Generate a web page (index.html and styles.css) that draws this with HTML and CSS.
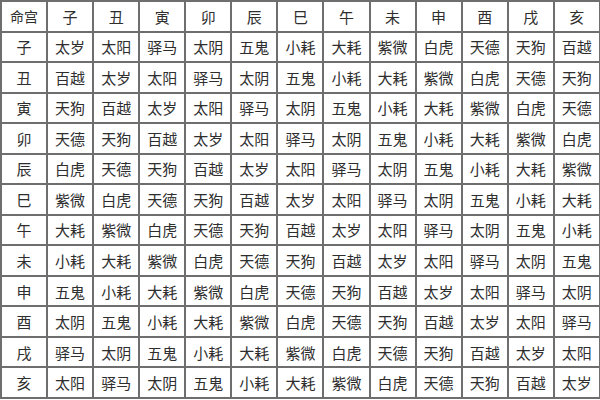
FILE: index.html
```html
<!DOCTYPE html>
<html lang="zh">
<head>
<meta charset="utf-8">
<link rel="stylesheet" href="styles.css">
</head>
<body>
<table class="grid">
<tr class="head"><td class="corner">命宫</td><td>子</td><td>丑</td><td>寅</td><td>卯</td><td>辰</td><td>巳</td><td>午</td><td>未</td><td>申</td><td>酉</td><td>戌</td><td>亥</td></tr>
<tr><td>子</td><td>太岁</td><td>太阳</td><td>驿马</td><td>太阴</td><td>五鬼</td><td>小耗</td><td>大耗</td><td>紫微</td><td>白虎</td><td>天德</td><td>天狗</td><td>百越</td></tr>
<tr><td>丑</td><td>百越</td><td>太岁</td><td>太阳</td><td>驿马</td><td>太阴</td><td>五鬼</td><td>小耗</td><td>大耗</td><td>紫微</td><td>白虎</td><td>天德</td><td>天狗</td></tr>
<tr><td>寅</td><td>天狗</td><td>百越</td><td>太岁</td><td>太阳</td><td>驿马</td><td>太阴</td><td>五鬼</td><td>小耗</td><td>大耗</td><td>紫微</td><td>白虎</td><td>天德</td></tr>
<tr><td>卯</td><td>天德</td><td>天狗</td><td>百越</td><td>太岁</td><td>太阳</td><td>驿马</td><td>太阴</td><td>五鬼</td><td>小耗</td><td>大耗</td><td>紫微</td><td>白虎</td></tr>
<tr><td>辰</td><td>白虎</td><td>天德</td><td>天狗</td><td>百越</td><td>太岁</td><td>太阳</td><td>驿马</td><td>太阴</td><td>五鬼</td><td>小耗</td><td>大耗</td><td>紫微</td></tr>
<tr><td>巳</td><td>紫微</td><td>白虎</td><td>天德</td><td>天狗</td><td>百越</td><td>太岁</td><td>太阳</td><td>驿马</td><td>太阴</td><td>五鬼</td><td>小耗</td><td>大耗</td></tr>
<tr><td>午</td><td>大耗</td><td>紫微</td><td>白虎</td><td>天德</td><td>天狗</td><td>百越</td><td>太岁</td><td>太阳</td><td>驿马</td><td>太阴</td><td>五鬼</td><td>小耗</td></tr>
<tr><td>未</td><td>小耗</td><td>大耗</td><td>紫微</td><td>白虎</td><td>天德</td><td>天狗</td><td>百越</td><td>太岁</td><td>太阳</td><td>驿马</td><td>太阴</td><td>五鬼</td></tr>
<tr><td>申</td><td>五鬼</td><td>小耗</td><td>大耗</td><td>紫微</td><td>白虎</td><td>天德</td><td>天狗</td><td>百越</td><td>太岁</td><td>太阳</td><td>驿马</td><td>太阴</td></tr>
<tr><td>酉</td><td>太阴</td><td>五鬼</td><td>小耗</td><td>大耗</td><td>紫微</td><td>白虎</td><td>天德</td><td>天狗</td><td>百越</td><td>太岁</td><td>太阳</td><td>驿马</td></tr>
<tr><td>戌</td><td>驿马</td><td>太阴</td><td>五鬼</td><td>小耗</td><td>大耗</td><td>紫微</td><td>白虎</td><td>天德</td><td>天狗</td><td>百越</td><td>太岁</td><td>太阳</td></tr>
<tr><td>亥</td><td>太阳</td><td>驿马</td><td>太阴</td><td>五鬼</td><td>小耗</td><td>大耗</td><td>紫微</td><td>白虎</td><td>天德</td><td>天狗</td><td>百越</td><td>太岁</td></tr>
</table>
</body>
</html>
```
FILE: styles.css
```css
html, body {
  margin: 0;
  padding: 0;
  background: #ffffff;
}
.grid {
  width: 601px;
  height: 399px;
  border-collapse: collapse;
  table-layout: fixed;
  font-family: "Noto Sans CJK SC", "Noto Sans", sans-serif;
  font-size: 15px;
  color: #2e2e2e;
}
.grid td {
  border: 2px solid #6e6e6e;
  text-align: center;
  vertical-align: middle;
  padding: 0;
  line-height: 1;
}
.grid .corner {
  font-size: 14px;
}
```
